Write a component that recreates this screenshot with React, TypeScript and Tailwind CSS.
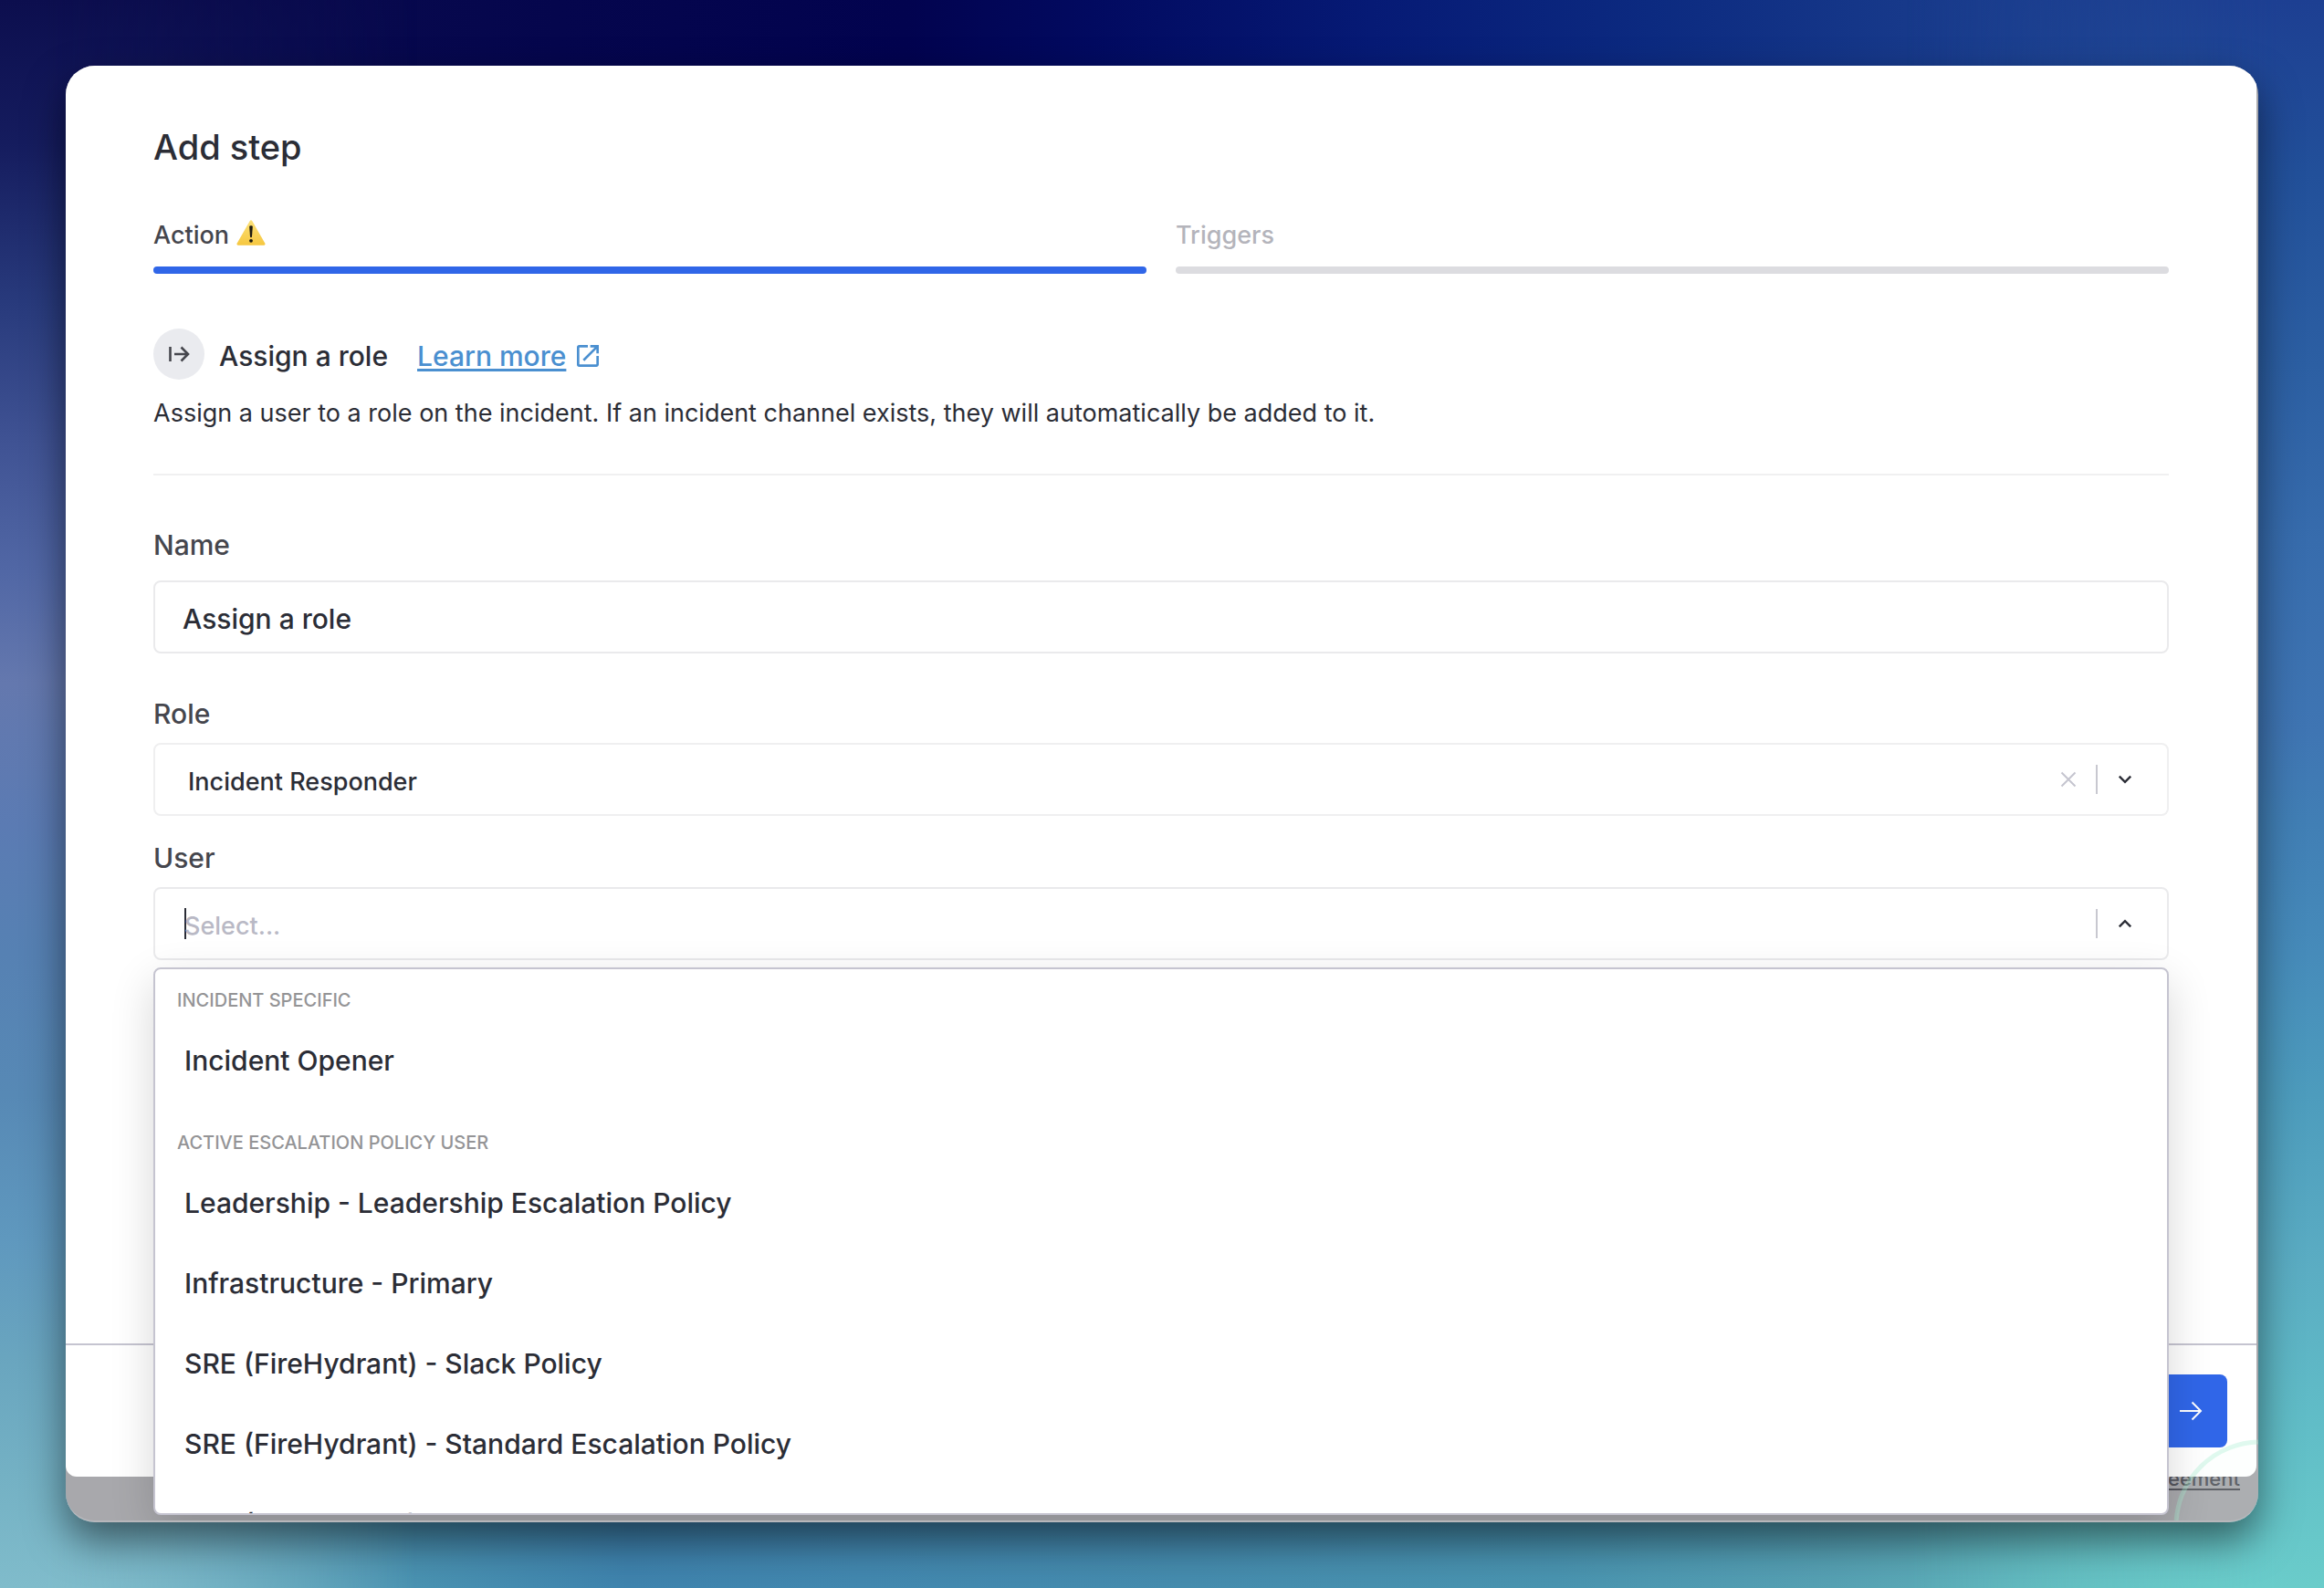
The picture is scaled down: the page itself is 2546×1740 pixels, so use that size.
import { MdOpenInNew } from "react-icons/md";

const groups = [
  { label: "INCIDENT SPECIFIC", options: ["Incident Opener"] },
  {
    label: "ACTIVE ESCALATION POLICY USER",
    options: [
      "Leadership - Leadership Escalation Policy",
      "Infrastructure - Primary",
      "SRE (FireHydrant) - Slack Policy",
      "SRE (FireHydrant) - Standard Escalation Policy",
      "SRE (FireHydrant) - Secondary Policy",
    ],
  },
];

function WarningIcon() {
  return (
    <svg viewBox="0 0 32 28" className="w-8 h-7 mb-1.5" role="img" aria-label="Warning">
      <defs>
        <linearGradient id="warn" x1="0" y1="0" x2="0" y2="1">
          <stop offset="0" stopColor="#fbe078" />
          <stop offset="1" stopColor="#f6c740" />
        </linearGradient>
      </defs>
      <path d="M14.6 1.2a1.6 1.6 0 0 1 2.8 0l14 24.6a1.4 1.4 0 0 1-1.2 2H1.8a1.4 1.4 0 0 1-1.2-2z" fill="url(#warn)" />
      <path d="M14.2 7.6q0-1.4 1.8-1.4t1.8 1.4L17 18.2q-.1 1-1 1t-1-1z" fill="#1d1a10" />
      <circle cx="16" cy="22.8" r="1.9" fill="#1d1a10" />
    </svg>
  );
}

function Chevron({ up = false }: { up?: boolean }) {
  return (
    <svg viewBox="0 0 16 16" className="size-4" fill="none" stroke="#2b2d36" strokeWidth="2.4" aria-hidden>
      <path d={up ? "M1.8 11.4 8 5.2l6.2 6.2" : "M1.8 4.6 8 10.8l6.2-6.2"} />
    </svg>
  );
}

function Backdrop() {
  return (
    <div className="absolute inset-0" aria-hidden>
      <div className="absolute inset-0 bg-[linear-gradient(to_right,#0c0e4e_0%,#05064d_24%,#02034f_39%,#020a60_47%,#061a75_59%,#0c2a80_71%,#17398a_82%,#1f4592_94%,#1d4193_100%)]" />
      <div className="absolute inset-0 bg-[linear-gradient(to_right,#80bccb_0%,#6fafc2_6%,#5ba0b8_12%,#4a93b2_18%,#3f84ae_27%,#4389b0_37%,#468dae_51%,#4a95b0_67%,#57a2b3_79%,#62b8bd_90%,#6acaca_100%)] mask-[linear-gradient(to_top,black_0%,transparent_80%)]" />
      <div className="absolute inset-0 bg-[linear-gradient(to_bottom,#0c0e4e_0%,#151c5e_9%,#283a7c_19%,#405394_28%,#5167a5_36%,#6478ae_43%,#5b7bb3_52%,#5681b3_60%,#5789b5_69%,#5f98be_78%,#6aa6bf_86%,#74b1c4_93%,#80bccb_100%)] mask-[linear-gradient(to_right,black_0%,black_2%,transparent_18%)]" />
      <div className="absolute inset-0 bg-[linear-gradient(to_bottom,#1d3f92_0%,#22509a_11%,#2c5fa3_23%,#376cad_34%,#3f75b3_46%,#417fb5_52%,#468bba_60%,#4d9cbd_69%,#5badc3_80%,#60bcc7_89%,#6accca_100%)] mask-[linear-gradient(to_left,black_0%,black_2%,transparent_18%)]" />
    </div>
  );
}

function UserMenu() {
  return (
    <div
      role="listbox"
      aria-label="User"
      className="absolute inset-x-0 top-full z-20 mt-2 h-[600px] overflow-hidden rounded-lg border-2 border-[#c5c4d0] bg-white pt-3 shadow-[0_16px_48px_rgba(0,0,0,0.16)]"
    >
      {groups.map((group) => (
        <div key={group.label} role="group" aria-label={group.label} className="mb-6">
          <div className="flex h-11 items-center px-6 text-[20px] text-[#949496]">{group.label}</div>
          {group.options.map((option) => (
            <div key={option} role="option" aria-selected={false} className="flex h-22 items-center px-8 text-[30px]">
              {option}
            </div>
          ))}
        </div>
      ))}
    </div>
  );
}

export default function App() {
  return (
    <div className="relative flex min-h-screen flex-col p-18 font-['Inter',sans-serif] font-[450] text-[#2b2d36]">
      <Backdrop />

      <div className="relative flex grow flex-col rounded-[32px] shadow-[0_20px_44px_rgba(0,0,0,0.5)]">
        <div className="relative flex grow flex-col overflow-hidden rounded-[32px] border-b-2 border-[#b7b7bb] bg-[#a8a8ac]">
          {/* Dialog */}
          <div role="dialog" aria-labelledby="dialog-title" className="mr-0.5 flex grow flex-col rounded-b-xl bg-white">
            <div className="grow px-24 pt-16">
              <h1 id="dialog-title" className="text-[38px] leading-[50px]">Add step</h1>

              <div className="mt-[50px] grid grid-cols-2 gap-8 text-[27px] leading-[44px]">
                <div>
                  <div className="flex items-center gap-2 text-[#45464d]">
                    Action
                    <WarningIcon />
                  </div>
                  <div className="mt-3 h-2 rounded-full bg-[#3066e8]" />
                </div>
                <div>
                  <div className="text-[#b4b4bb]">Triggers</div>
                  <div className="mt-3 h-2 rounded-full bg-[#dcdce0]" />
                </div>
              </div>

              <div className="mt-15 flex items-center">
                <span className="flex size-14 items-center justify-center rounded-full bg-[#eaebef]">
                  <svg viewBox="0 0 24 24" className="size-6" fill="none" stroke="#45464d" strokeWidth="2.6" aria-hidden>
                    <path d="M2.5 4v16M7 12h14.5M14.5 4.5 22 12l-7.500 7.500" />
                  </svg>
                </span>
                <h2 className="ml-4 pt-1 text-[30px] leading-[44px]">Assign a role</h2>
                <a href="#learn-more" className="ml-8 flex items-center gap-2 pt-1 text-[30px] leading-[44px] text-[#4a8fd0]">
                  <span className="underline decoration-3 underline-offset-3">Learn more</span>
                  <MdOpenInNew className="size-8" aria-hidden />
                </a>
              </div>

              <p className="mt-4 border-b-2 border-[#f0f0f1] pb-[45px] text-[27px] leading-[42px] font-normal">
                Assign a user to a role on the incident. If an incident channel exists, they will automatically be added to it.
              </p>

              <label htmlFor="name" className="mt-14 mb-[19px] block text-[30px] leading-10 text-[#45464d]">Name</label>
              <input
                id="name"
                defaultValue="Assign a role"
                className="block h-20 w-full rounded-lg border-2 border-[#eaeaec] px-[30px] pt-1 text-[30px] outline-none"
              />

              <label htmlFor="role" className="mt-[46px] mb-3 block text-[30px] leading-10 text-[#45464d]">Role</label>
              <div className="flex h-20 items-center rounded-lg border-2 border-[#efeff0] pr-[30px]">
                <input id="role" role="combobox" aria-expanded={false} defaultValue="Incident Responder" className="h-full grow pt-1 pl-9 text-[27px] outline-none" />
                <button type="button" aria-label="Clear role" className="px-5">
                  <svg viewBox="0 0 20 20" className="size-5" stroke="#c5c5cf" strokeWidth="2" aria-hidden>
                    <path d="m2.500 2.500 15 15M17.500 2.500l-15 15" />
                  </svg>
                </button>
                <span className="h-8 w-0.5 bg-[#c8c8d0]" />
                <button type="button" aria-label="Open role options" className="pr-2 pl-[22px]">
                  <Chevron />
                </button>
              </div>

              <label htmlFor="user" className="mt-[26px] mb-3 block text-[30px] leading-10 text-[#45464d]">User</label>
              <div className="relative">
                <div className="flex h-20 items-center rounded-lg border-2 border-[#eaeaec] pr-[30px] pl-8">
                  <span className="h-[34px] w-0.5 bg-[#2b2d36]" />
                  <input
                    id="user"
                    role="combobox"
                    aria-expanded
                    placeholder="Select..."
                    className="-ml-0.5 h-full grow pt-1 text-[27px] outline-none placeholder:text-[#b9b9c5]"
                  />
                  <span className="h-8 w-0.5 bg-[#c8c8d0]" />
                  <button type="button" aria-label="Close user options" className="pr-2 pl-[22px]">
                    <Chevron up />
                  </button>
                </div>
                <UserMenu />
              </div>
            </div>

            <div className="flex h-[146px] items-center justify-end border-t-2 border-[#c5c4d0] pr-8">
              <button type="button" className="flex h-20 items-center gap-4 rounded-lg bg-[#3066e8] pr-6 pl-8 text-[30px] text-white">
                Next
                <svg viewBox="0 0 32 24" className="h-6 w-8" fill="none" stroke="currentColor" strokeWidth="2" aria-hidden>
                  <path d="M4 12h23M17.500 2.500 27 12l-9.500 9.500" />
                </svg>
              </button>
            </div>
          </div>

          {/* Page behind the dialog */}
          <div className="flex h-12 items-start justify-end overflow-hidden pr-5">
            <a href="#agreement" className="-mt-[18px] text-[22px] leading-10 text-[#55565e] underline decoration-2 underline-offset-3">Agreement</a>
          </div>

          <svg viewBox="0 0 96 96" className="absolute right-0 bottom-0 size-24" fill="none" aria-hidden>
            <circle cx="98" cy="102" r="92" fill="#e6fff5" fillOpacity="0.08" />
            <circle cx="98" cy="102" r="92" stroke="#a5efd0" strokeOpacity="0.35" strokeWidth="5" />
          </svg>
        </div>
      </div>
    </div>
  );
}
